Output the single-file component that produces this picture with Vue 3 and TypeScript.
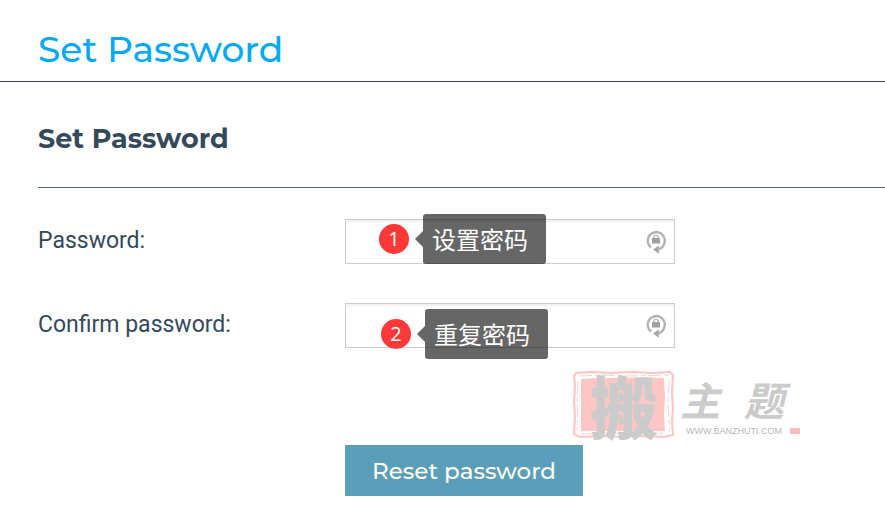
<script setup lang="ts">
import { reactive } from 'vue'

interface Field {
  id: 'password' | 'confirm'
  label: string
  step: number
  hint: string
}

const fields: Field[] = [
  { id: 'password', label: 'Password:', step: 1, hint: '设置密码' },
  { id: 'confirm', label: 'Confirm password:', step: 2, hint: '重复密码' },
]

const values = reactive({ password: '', confirm: '' })
</script>

<template>
  <div class="page">
    <header class="page-header">
      <h1>Set Password</h1>
    </header>

    <main class="content">
      <h2>Set Password</h2>

      <form class="form" @submit.prevent>
        <div v-for="field in fields" :key="field.id" class="row">
          <label :for="field.id">{{ field.label }}</label>
          <div class="control">
            <input :id="field.id" v-model="values[field.id]" type="password" autocomplete="new-password" />
            <svg class="lock" viewBox="0 0 22 26" aria-hidden="true">
              <path d="M6.2 18.6A8.6 8.6 0 1 1 18.6 16.2Q17 19.6 12.5 20.6" fill="none" stroke="#b4b4b4" stroke-width="2.5" />
              <path d="M8 20.6 13.8 16.4v8.4z" fill="#a6a6a6" />
              <path d="M8.9 9.6V8.2a2.1 2.1 0 0 1 4.2 0V9.6" fill="none" stroke="#b4b4b4" stroke-width="1.3" />
              <rect x="7" y="9" width="8" height="5.6" rx="0.5" fill="#a0a0a0" />
            </svg>
            <div class="note" :class="'note-' + field.step">
              <span class="badge">{{ field.step }}</span>
              <span class="tip">{{ field.hint }}</span>
            </div>
          </div>
        </div>

        <div class="actions">
          <button type="submit">Reset password</button>
        </div>

        <div class="watermark">
          <div class="seal">
            <svg class="seal-frame" viewBox="0 0 104 68" aria-hidden="true">
              <path d="M4 2 20 1 38 2 60 1 81 2 98 1 101 4 100 20 101 37 100 51 101 64 92 66 70 65 49 66 29 65 8 66 2 63 3 46 2 30 3 15 2 5Z" fill="none" stroke="#ffc6c6" stroke-width="2.2" stroke-linejoin="round" />
              <path d="M7 5 31 4 58 5 97 4M6 10 5 27 6 48 5 60M97 10 96 31 97 50 97 61M9 63 39 62 65 63 94 62" fill="none" stroke="#ffd0d0" stroke-width="1" stroke-dasharray="13 3 5 2" />
              <path d="M9 8 26 7 49 7 71 6 92 7 93 27 92 43 93 60 74 60 53 60 31 60 9 60 9 43 9 27Z" fill="#ffc6c6" />
            </svg>
            <span class="seal-char">搬</span>
          </div>
          <div class="brand">
            <span class="brand-name"><span>主</span><span>题</span></span>
            <span class="brand-site">WWW.BANZHUTI.COM<i class="chip"></i></span>
          </div>
        </div>
      </form>
    </main>
  </div>
</template>

<style>
body {
  margin: 0;
  background: #fff;
}
</style>

<style scoped>
.page {
  color: #34495a;
  font-family: Roboto, "Noto Sans CJK SC", sans-serif;
}

.page-header {
  padding: 27px 38px 10px;
  border-bottom: 1px solid #3b4652;
}

h1,
h2,
button {
  font-family: Montserrat, Inter, sans-serif;
}

h1 {
  margin: 0;
  color: #03a9f4;
  font-size: 36px;
  font-weight: 500;
  line-height: 44px;
}

.content {
  padding: 40px 0 16px 38px;
}

h2 {
  margin: 0;
  padding-bottom: 31px;
  border-bottom: 1px solid #55636f;
  font-size: 27px;
  font-weight: 700;
  line-height: 34px;
}

.form {
  position: relative;
  display: flex;
  flex-direction: column;
  gap: 39px;
  padding-top: 31px;
}

.row,
.actions {
  display: grid;
  grid-template-columns: 307px minmax(0, 330px);
  align-items: center;
}

label {
  font-size: 23px;
  font-weight: 400;
  line-height: 28px;
  padding-bottom: 2px;
}

.control {
  position: relative;
}

input {
  display: block;
  box-sizing: border-box;
  width: 100%;
  height: 45px;
  padding: 0 40px 0 12px;
  border: 1px solid #ccc;
  border-radius: 0;
  outline: 0;
  background: #fff;
  box-shadow: inset 0 2px 2px #f1f1f1;
  font: inherit;
}

.lock {
  position: absolute;
  top: 10px;
  right: 8px;
  width: 22px;
  height: 26px;
}

.note {
  position: absolute;
  display: flex;
  align-items: center;
  gap: 14px;
}

.note-1 {
  top: -5px;
  left: 34px;
}

.note-2 {
  top: 6px;
  left: 36px;
}

.badge {
  width: 30px;
  border-radius: 50%;
  background: #ff3838;
  color: #fff;
  font-family: "Open Sans", sans-serif;
  font-size: 20px;
  line-height: 30px;
  text-align: center;
}

.tip {
  position: relative;
  box-sizing: border-box;
  width: 123px;
  padding-left: 9px;
  border-radius: 3px;
  background: rgba(0, 0, 0, 0.6);
  color: #fff;
  font-family: "Noto Sans CJK SC", sans-serif;
  font-size: 24px;
  line-height: 50px;
  white-space: nowrap;
}

.tip::before {
  content: "";
  position: absolute;
  top: 17px;
  right: 100%;
  border: solid transparent;
  border-width: 8px 8px 8px 0;
  border-right-color: rgba(0, 0, 0, 0.6);
}

.actions {
  padding-top: 58px;
}

button {
  justify-self: start;
  grid-column: 2;
  padding: 1px 27px 0 27px;
  border: 0;
  border-radius: 0;
  background: #5a9eb9;
  color: #fffff0;
  font-size: 23px;
  font-weight: 500;
  line-height: 50px;
}

.watermark {
  position: absolute;
  top: 183px;
  left: 534px;
  display: flex;
  color: #cbcbcb;
}

.seal {
  position: relative;
  width: 104px;
  height: 68px;
}

.seal-frame {
  display: block;
  width: 100%;
  height: 100%;
}

.seal-char {
  position: absolute;
  inset: 0;
  font-family: "Noto Sans CJK SC", sans-serif;
  font-size: 68px;
  font-weight: 900;
  line-height: 68px;
  text-align: center;
}

.brand {
  display: flex;
  flex-direction: column;
  gap: 8px;
  padding: 12px 0 0 4px;
}

.brand-name {
  display: flex;
  gap: 24px;
  font-family: "Noto Sans CJK SC", sans-serif;
  font-size: 40px;
  font-weight: 700;
  font-style: italic;
  line-height: 32px;
}

.brand-site {
  display: flex;
  align-items: center;
  gap: 8px;
  padding-left: 6px;
  color: #b8b8b8;
  font-family: "Liberation Sans", sans-serif;
  font-size: 9px;
  line-height: 16px;
}

.chip {
  width: 10px;
  height: 6px;
  background: #ffbcbc;
}
</style>
